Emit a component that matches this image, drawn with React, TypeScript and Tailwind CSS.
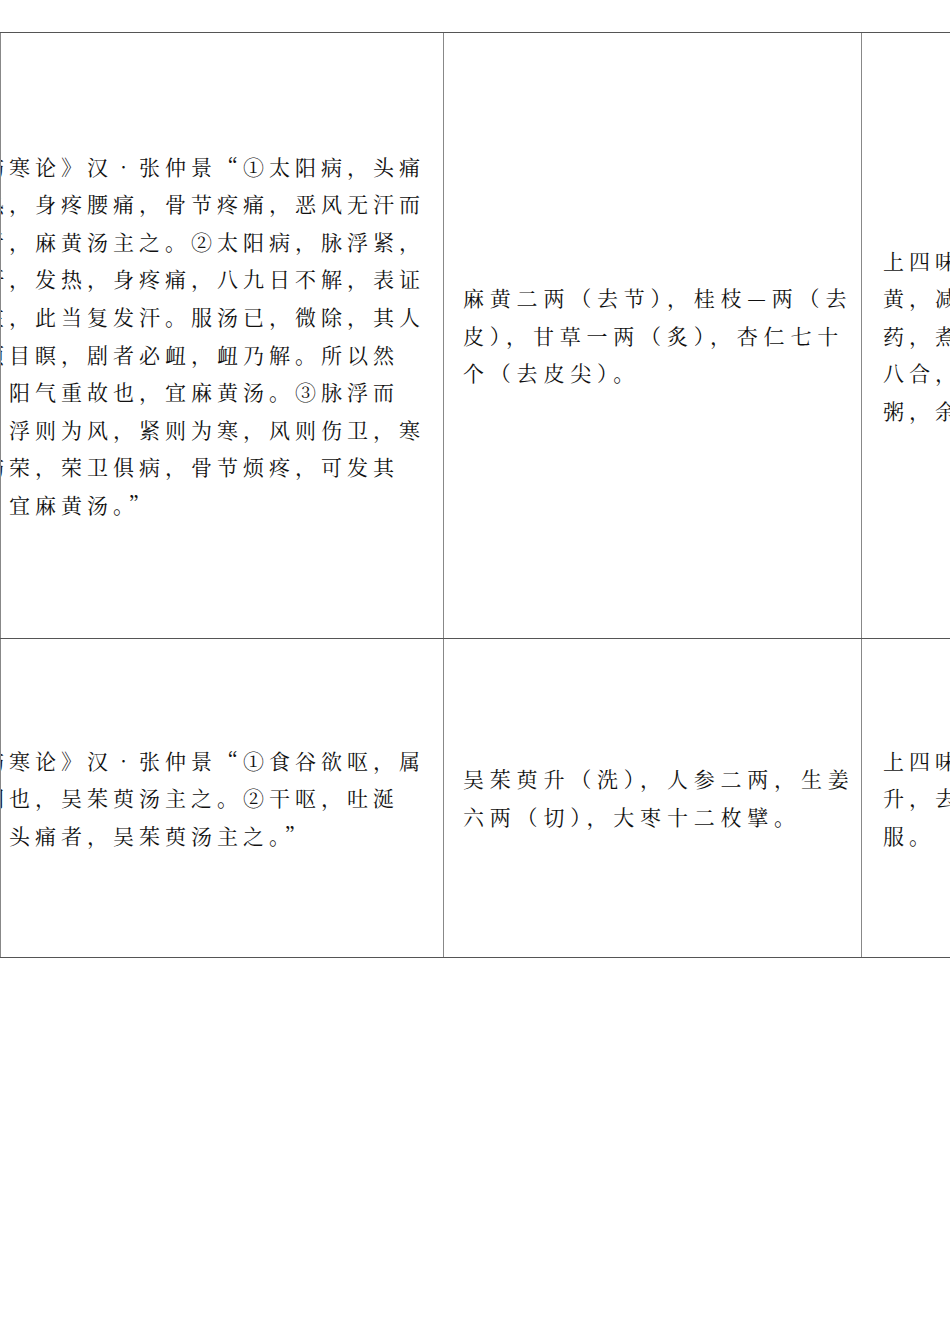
const FONT = "font-['Noto_Serif_CJK_SC','Noto_Sans_CJK_SC','Liberation_Serif',serif]";

const ROW1_COL1 = [
  "《伤寒论》汉•张仲景“①太阳病，头痛",
  "发热，身疼腰痛，骨节疼痛，恶风无汗而",
  "喘者，麻黄汤主之。②太阳病，脉浮紧，",
  "无汗，发热，身疼痛，八九日不解，表证",
  "仍在，此当复发汗。服汤已，微除，其人",
  "发烦目瞑，剧者必衄，衄乃解。所以然",
  "者，阳气重故也，宜麻黄汤。③脉浮而",
  "紧，浮则为风，紧则为寒，风则伤卫，寒",
  "则伤荣，荣卫俱病，骨节烦疼，可发其",
  "汗，宜麻黄汤。”",
];

const ROW1_COL2 = [
  "麻黄二两（去节），桂枝—两（去",
  "皮），甘草一两（炙），杏仁七十",
  "个（去皮尖）。",
];

const ROW1_COL3 = [
  "上四味，以水九升，先煮麻",
  "黄，减二升，去上沫，内诸",
  "药，煮取二升半，去滓，温服",
  "八合，覆取微似汗，不须啜",
  "粥，余如桂枝法将息。",
];

const ROW2_COL1 = [
  "《伤寒论》汉•张仲景“①食谷欲呕，属",
  "阳明也，吴茱萸汤主之。②干呕，吐涎",
  "沫，头痛者，吴茱萸汤主之。”",
];

const ROW2_COL2 = [
  "吴茱萸升（洗），人参二两，生姜",
  "六两（切），大枣十二枚擘。",
];

const ROW2_COL3 = [
  "上四味，以水七升，煮取二",
  "升，去滓，温服七合，日三",
  "服。",
];

function Lines({ lines, tracking = "tracking-[5px]" }: { lines: string[]; tracking?: string }) {
  return (
    <div className="flex flex-col">
      {lines.map((l, i) => (
        <div key={i} className={`whitespace-nowrap leading-[37.6px] text-[21px] text-[#111] ${tracking}`}>
          {l}
        </div>
      ))}
    </div>
  );
}

function Row({ height, c1, c2, c3, last }: { height: string; c1: string[]; c2: string[]; c3: string[]; last?: boolean }) {
  return (
    <div className={`flex border-t border-t-[#555] ${last ? "border-b border-b-[#555]" : ""} ${height}`}>
      <div className="w-[443px] flex-none flex items-center overflow-hidden border-l border-l-[#888]">
        <div className="ml-[-44px]">
          <Lines lines={c1} />
        </div>
      </div>
      <div className="w-[418px] flex-none flex items-center overflow-hidden border-l border-l-[#888] pl-[19px]">
        <Lines lines={c2} tracking="tracking-[5.8px]" />
      </div>
      <div className="w-[430px] flex-none flex items-center overflow-hidden border-l border-l-[#888] pl-[21px]">
        <Lines lines={c3} />
      </div>
    </div>
  );
}

export default function App() {
  return (
    <div className={`w-[950px] h-[1344px] overflow-hidden bg-white pt-[32px] ${FONT}`}>
      <div className="w-[1291px] flex flex-col">
        <Row height="h-[606px]" c1={ROW1_COL1} c2={ROW1_COL2} c3={ROW1_COL3} />
        <Row height="h-[320px]" c1={ROW2_COL1} c2={ROW2_COL2} c3={ROW2_COL3} last />
      </div>
    </div>
  );
}
